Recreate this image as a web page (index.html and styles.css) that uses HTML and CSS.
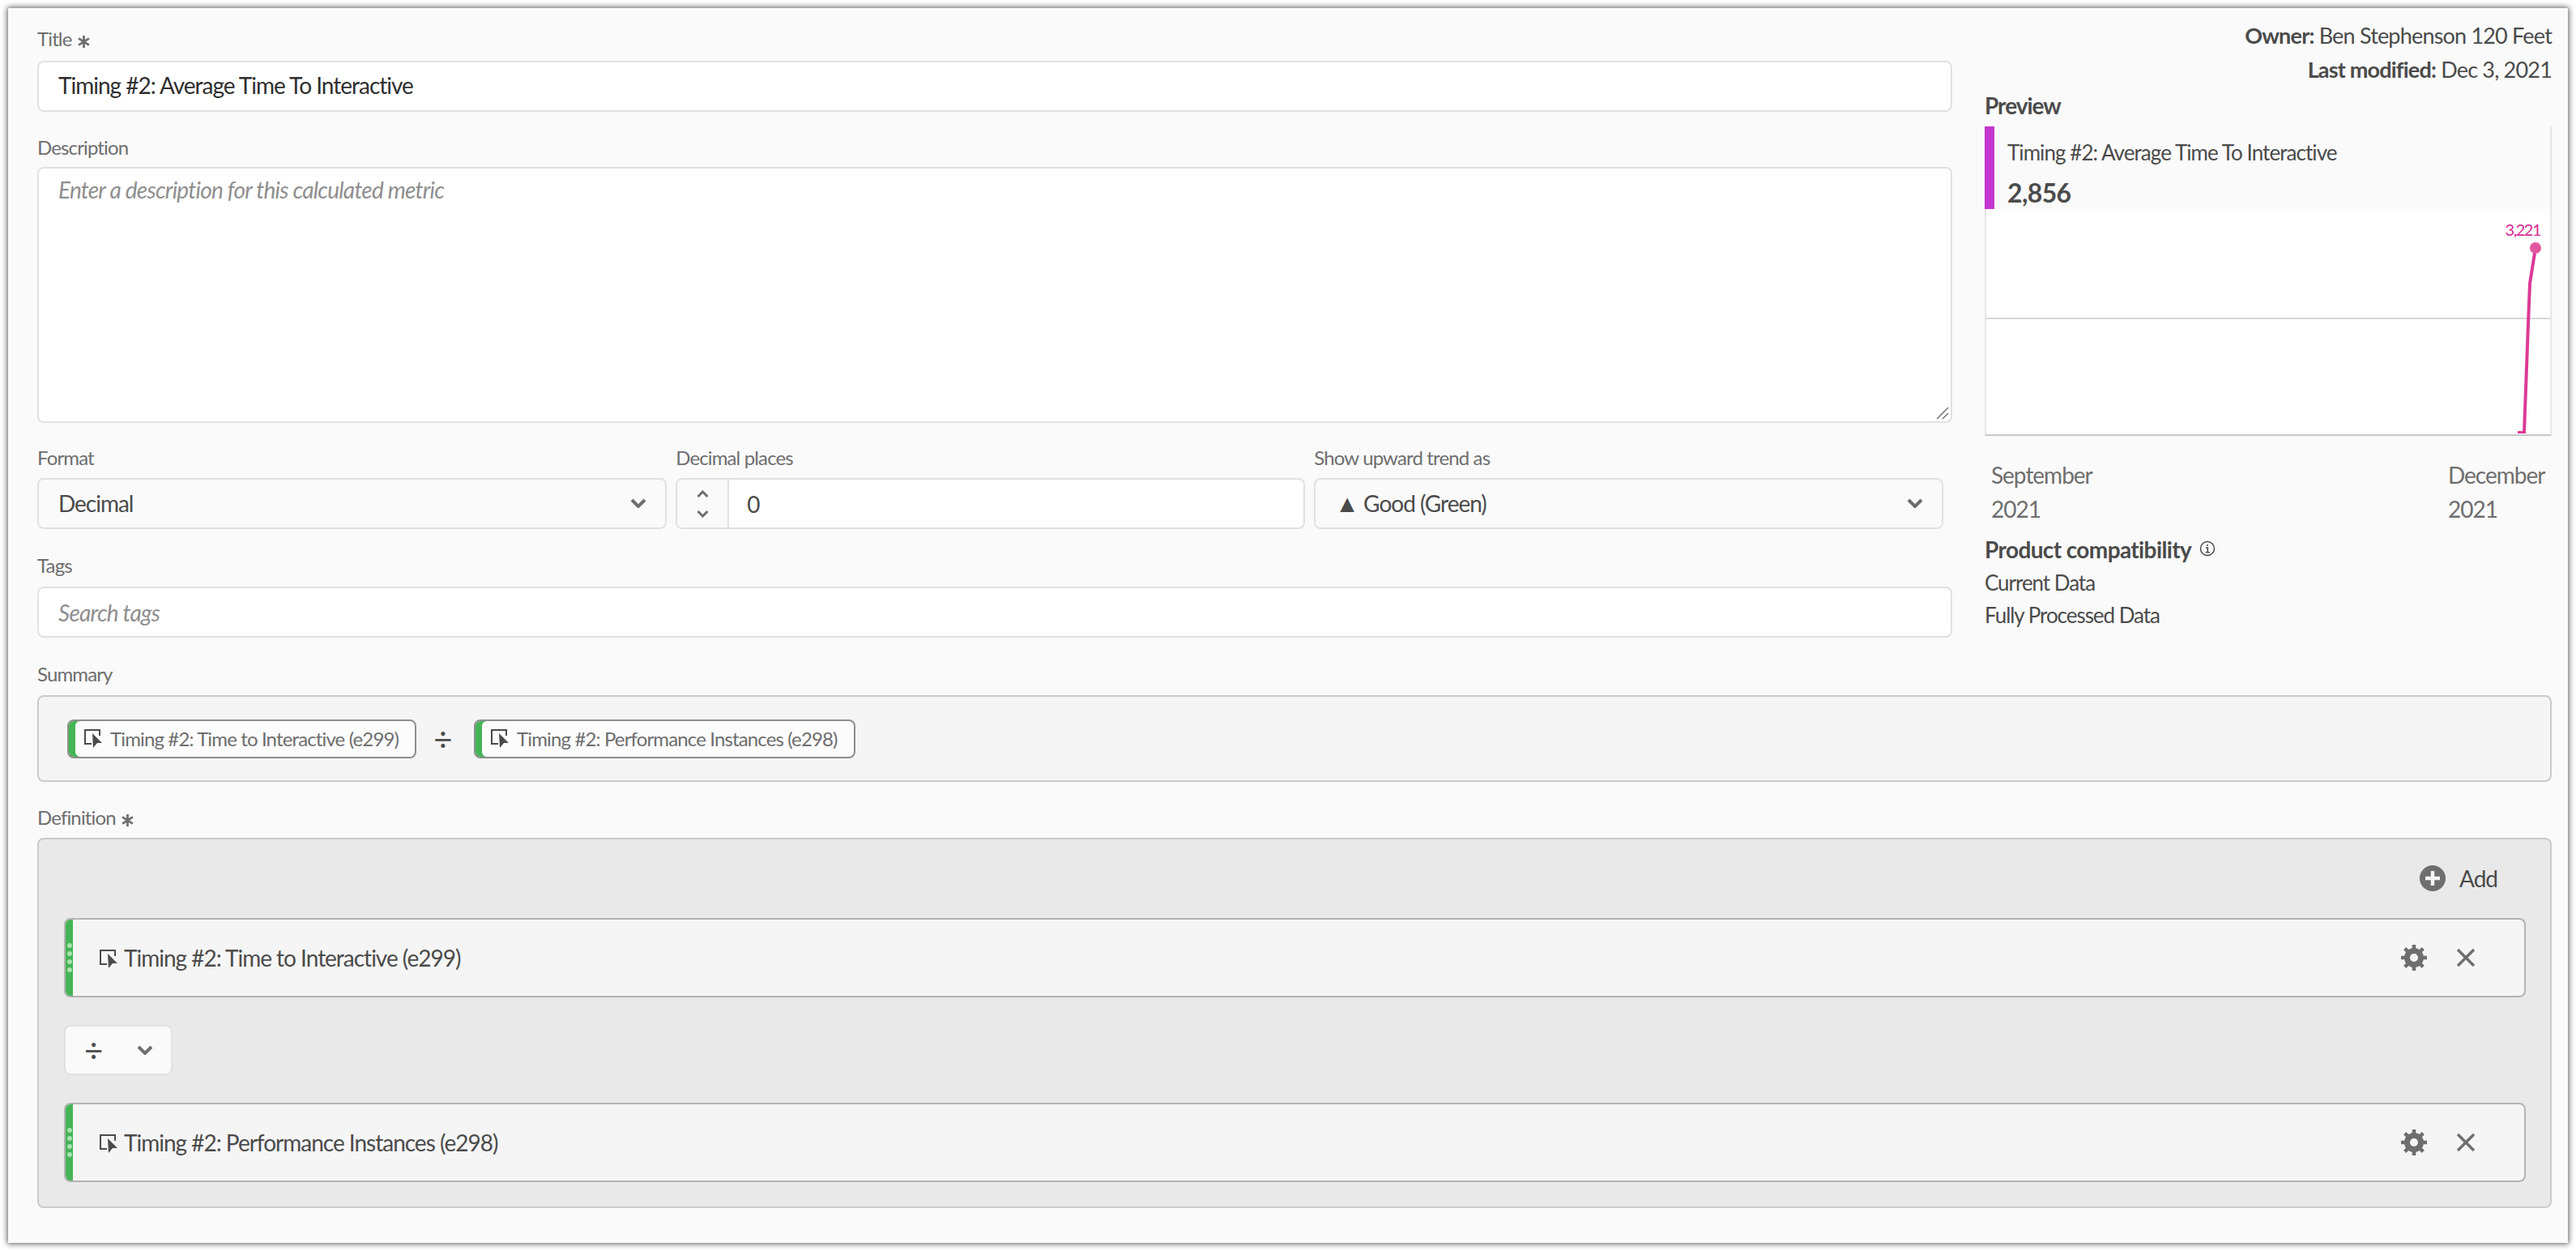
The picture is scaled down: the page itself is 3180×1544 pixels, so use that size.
FILE: index.html
```html
<!DOCTYPE html>
<html lang="en">
<head>
<meta charset="utf-8">
<title>Calculated metric</title>
<link rel="stylesheet" href="styles.css">
</head>
<body>
<svg class="sprites" width="0" height="0" aria-hidden="true">
  <defs>
    <symbol id="chev" viewBox="0 0 20 12"><path d="M2 2l8 8 8-8" fill="none" stroke="currentColor" stroke-width="4"/></symbol>
    <symbol id="dim" viewBox="0 0 23 24">
      <path d="M9 18H1V1H19V8" fill="none" stroke="currentColor" stroke-width="2"/>
      <path d="M10 5L22 17H16L11 23Z" fill="currentColor"/>
    </symbol>
    <symbol id="gear" viewBox="0 0 32 32">
      <circle cx="16" cy="16" r="8.5" fill="none" stroke="currentColor" stroke-width="7"/>
      <path d="M16 0v32M0 16h32M4.7 4.7l22.6 22.6M27.3 4.7L4.7 27.3" stroke="currentColor" stroke-width="4.5" stroke-dasharray="7 18 7"/>
    </symbol>
    <symbol id="close" viewBox="0 0 24 24"><path d="M2 2l20 20M22 2L2 22" fill="none" stroke="currentColor" stroke-width="3.4"/></symbol>
    <symbol id="star" viewBox="0 0 14 14"><path d="M7 0v14M1 3.2l12 7.6M13 3.2L1 10.8" fill="none" stroke="currentColor" stroke-width="2.6"/></symbol>
  </defs>
</svg>
<main class="panel">
  <div class="top">
    <div class="left">
      <label class="label label-first">Title <svg class="req"><use href="#star"/></svg></label>
      <div class="control input-white value">Timing #2: Average Time To Interactive</div>
      <label class="label gap-31 label-tight">Description</label>
      <div class="control textarea placeholder">
        Enter a description for this calculated metric
        <svg class="grip" width="16" height="16" viewBox="0 0 16 16"><path d="M1 15L15 1M8 15l7-7" stroke="#7a7a7a" stroke-width="1.6" fill="none"/></svg>
      </div>
      <div class="format-row">
        <div>
          <label class="label">Format</label>
          <div class="control select value-soft">Decimal<svg class="chev"><use href="#chev"/></svg></div>
        </div>
        <div>
          <label class="label">Decimal places</label>
          <div class="control stepper">
            <div class="stepper-btns">
              <svg class="step-chev step-up"><use href="#chev"/></svg>
              <svg class="step-chev"><use href="#chev"/></svg>
            </div>
            <div class="stepper-val">0</div>
          </div>
        </div>
        <div>
          <label class="label">Show upward trend as</label>
          <div class="control select value-soft"><span><span class="tri">▲</span> Good (Green)</span><svg class="chev"><use href="#chev"/></svg></div>
        </div>
      </div>
      <label class="label gap-32 label-wide">Tags</label>
      <div class="control input-white placeholder">Search tags</div>
    </div>
    <aside class="right">
      <div class="meta"><b>Owner:</b> Ben Stephenson 120 Feet</div>
      <div class="meta"><b>Last modified:</b> Dec 3, 2021</div>
      <h2 class="preview-title">Preview</h2>
      <div class="card">
        <div class="card-head">
          <div class="card-name">Timing #2: Average Time To Interactive</div>
          <div class="card-value">2,856</div>
        </div>
        <svg class="chart" viewBox="0 0 696 277" width="696" height="277">
          <line x1="0" y1="135" x2="696" y2="135" stroke="#d8d8d8" stroke-width="2"/>
          <text x="684" y="33" text-anchor="end" class="chart-label">3,221</text>
          <polyline points="678,48 671,92 669,142 664,276 656,276" fill="none" stroke="#dc3a96" stroke-width="4"/>
          <circle cx="678" cy="48" r="7" fill="#e3579f"/>
        </svg>
      </div>
      <div class="dates">
        <div>September<br>2021</div>
        <div>December<br>2021</div>
      </div>
      <div class="compat-title">Product compatibility
        <svg class="info" width="20" height="20" viewBox="0 0 20 20"><circle cx="10" cy="10" r="8.5" fill="none" stroke="#4b4b4b" stroke-width="1.5"/><path d="M8 9h2.3v5.5M7.8 14.8h5M10 5v2" fill="none" stroke="#4b4b4b" stroke-width="1.6"/></svg>
      </div>
      <div class="compat compat-first">Current Data</div>
      <div class="compat">Fully Processed Data</div>
    </aside>
  </div>

  <label class="label gap-32 label-wide">Summary</label>
  <section class="summary">
    <div class="chip"><svg class="dim-sm"><use href="#dim"/></svg>Timing #2: Time to Interactive (e299)</div>
    <div class="chip-op">÷</div>
    <div class="chip"><svg class="dim-sm"><use href="#dim"/></svg>Timing #2: Performance Instances (e298)</div>
  </section>

  <label class="label gap-31">Definition <svg class="req"><use href="#star"/></svg></label>
  <section class="definition">
    <div class="add-row">
      <svg class="plus" width="32" height="32" viewBox="0 0 32 32"><circle cx="16" cy="16" r="16" fill="#6e6e6e"/><path d="M16 7v18M7 16h18" stroke="#f5f5f5" stroke-width="4.4"/></svg>
      <span>Add</span>
    </div>
    <div class="metric">
      <div class="grab"><i></i><i></i><i></i><i></i></div>
      <svg class="dim-lg"><use href="#dim"/></svg>
      <span class="metric-name">Timing #2: Time to Interactive (e299)</span>
      <svg class="gear"><use href="#gear"/></svg>
      <svg class="close"><use href="#close"/></svg>
    </div>
    <div class="operator">
      <span class="op-sign">÷</span>
      <svg class="chev"><use href="#chev"/></svg>
    </div>
    <div class="metric">
      <div class="grab"><i></i><i></i><i></i><i></i></div>
      <svg class="dim-lg"><use href="#dim"/></svg>
      <span class="metric-name">Timing #2: Performance Instances (e298)</span>
      <svg class="gear"><use href="#gear"/></svg>
      <svg class="close"><use href="#close"/></svg>
    </div>
  </section>
</main>
</body>
</html>
```
FILE: styles.css
```css
* { box-sizing: border-box; letter-spacing: -0.036em; }
html, body { margin: 0; background: #fff; }
body { height: 1544px; overflow: hidden; font-family: "Lato", "Open Sans", sans-serif; color: #4b4b4b; }
.sprites { position: absolute; }

.panel {
  margin: 10px;
  width: 3160px;
  height: 1524px;
  padding: 13px 20px 0 36px;
  background: #fafafa;
  box-shadow: 0 0 7px 1px rgba(0, 0, 0, .65);
}
.top { display: grid; grid-template-columns: 2364px 700px; column-gap: 40px; height: 764px; }

.label { display: block; height: 30px; margin-bottom: 8px; font-size: 24px; line-height: 26px; color: #6e6e6e; }
.label-first { margin-top: 12px; margin-bottom: 10px; }
.label-tight { margin-bottom: 7px; }
.label-wide { margin-bottom: 9px; }
.gap-32 { margin-top: 32px; }
.gap-31 { margin-top: 31px; }
.req { width: 15px; height: 15px; margin-left: 2px; vertical-align: -2px; color: #6e6e6e; }

.control { border: 2px solid #e1e1e1; border-radius: 8px; font-size: 28px; height: 63px; }
.input-white { display: flex; align-items: center; padding: 0 24px; background: #fff; }
.value { padding-bottom: 3px; color: #2f2f2f; }
.value-soft { color: #4b4b4b; }
.placeholder { font-style: italic; color: #8e8e8e; letter-spacing: -0.027em; }
.textarea { position: relative; height: 316px; padding: 8px 24px; line-height: 36px; background: #fff; }
.grip { position: absolute; right: 2px; bottom: 2px; }

.format-row { display: grid; grid-template-columns: repeat(3, 1fr); column-gap: 11.5px; width: 2353px; margin-top: 30px; }
.select { display: flex; align-items: center; justify-content: space-between; padding: 0 23px 1px 24px; background: #fafafa; }
.chev { width: 20px; height: 12px; color: #6e6e6e; }
.tri { font-size: 30px; line-height: 0; }
.stepper { display: flex; background: #fff; overflow: hidden; }
.stepper-btns { display: flex; flex-direction: column; align-items: center; justify-content: center; gap: 14px; width: 64px; background: #fafafa; border-right: 2px solid #e1e1e1; }
.step-chev { width: 15px; height: 10px; color: #6e6e6e; }
.step-up { transform: scaleY(-1); }
.stepper-val { padding-left: 22px; align-self: center; }

.right { min-width: 0; }
.meta { font-size: 27px; line-height: 42px; text-align: right; letter-spacing: -0.03em; }
.meta b { letter-spacing: -0.03em; }
.meta b, .preview-title, .compat-title { font-weight: 700; }
.preview-title { margin: 5px 0 8px; font-size: 28px; line-height: 36px; color: #4b4b4b; }
.card { border-left: 2px solid #e6e6e6; border-right: 2px solid #e6e6e6; border-top: 2px solid #e6e6e6; border-bottom: 2px solid #c8c8c8; background: #fff; height: 382px; }
.card-head { height: 102px; margin: -2px 0 0 -2px; padding: 14px 0 0 16px; background: #fafafa; border-left: 12px solid #c336cf; }
.card-name { font-size: 26px; line-height: 36px; }
.card-value { margin-top: 10px; font-size: 32px; line-height: 44px; font-weight: 700; letter-spacing: -0.02em; }
.chart { display: block; }
.chart-label { font-size: 20px; fill: #d8288f; letter-spacing: -1.5px; }

.dates { display: flex; justify-content: space-between; margin-top: 27px; padding: 0 8px; font-size: 28px; line-height: 42px; color: #6e6e6e; }
.dates div:last-child { width: 120px; }
.compat-title { margin-top: 11px; font-size: 28px; line-height: 36px; letter-spacing: -0.022em; }
.info { margin-left: 4px; vertical-align: 2px; }
.compat { font-size: 26px; line-height: 40px; letter-spacing: -0.04em; }
.compat-first { margin-top: 3px; }

.summary { display: flex; align-items: center; height: 107px; width: 3104px; padding-left: 35px; background: #f5f5f5; border: 2px solid #cacaca; border-radius: 8px; }
.chip { display: flex; align-items: center; height: 48px; padding-right: 20px; border: 2px solid #8e8e8e; border-radius: 8px; background: #fcfcfc; font-size: 24px; color: #6e6e6e; box-shadow: inset 8px 0 0 #44b556; white-space: nowrap; }
.dim-sm { width: 23px; height: 24px; margin: 0 9px 0 19px; color: #4b4b4b; flex: none; }
.chip-op { width: 71px; padding-right: 7px; text-align: center; font-size: 40px; line-height: 40px; color: #4b4b4b; }

.definition { width: 3104px; height: 457px; padding: 0 30px 0 31px; background: #e9e9e9; border: 2px solid #cacaca; border-radius: 8px; }
.add-row { display: flex; align-items: center; justify-content: flex-end; gap: 17px; height: 97px; padding: 0 35px 1px 0; font-size: 28px; }
.metric { display: flex; align-items: center; height: 98px; padding-right: 60px; background: #f5f5f5; border: 2px solid #b3b3b3; border-radius: 8px; overflow: hidden; }
.grab { display: flex; flex-direction: column; align-items: center; justify-content: center; gap: 4px; width: 9px; height: 100%; background: #44b556; flex: none; }
.grab i { width: 6px; height: 6px; border-radius: 50%; background: #a8e3b0; }
.dim-lg { width: 23px; height: 24px; margin: 4px 7px 0 33px; flex: none; color: #4b4b4b; }
.metric-name { flex: 1; font-size: 28px; }
.gear { width: 32px; height: 32px; color: #6e6e6e; }
.close { width: 24px; height: 24px; margin-left: 36px; color: #6e6e6e; }
.operator { display: flex; align-items: center; justify-content: space-between; width: 134px; height: 62px; margin: 34px 0; padding: 0 22px 0 23px; background: #fafafa; border: 2px solid #e1e1e1; border-radius: 8px; }
.op-sign { font-size: 40px; line-height: 40px; color: #4b4b4b; }
```
